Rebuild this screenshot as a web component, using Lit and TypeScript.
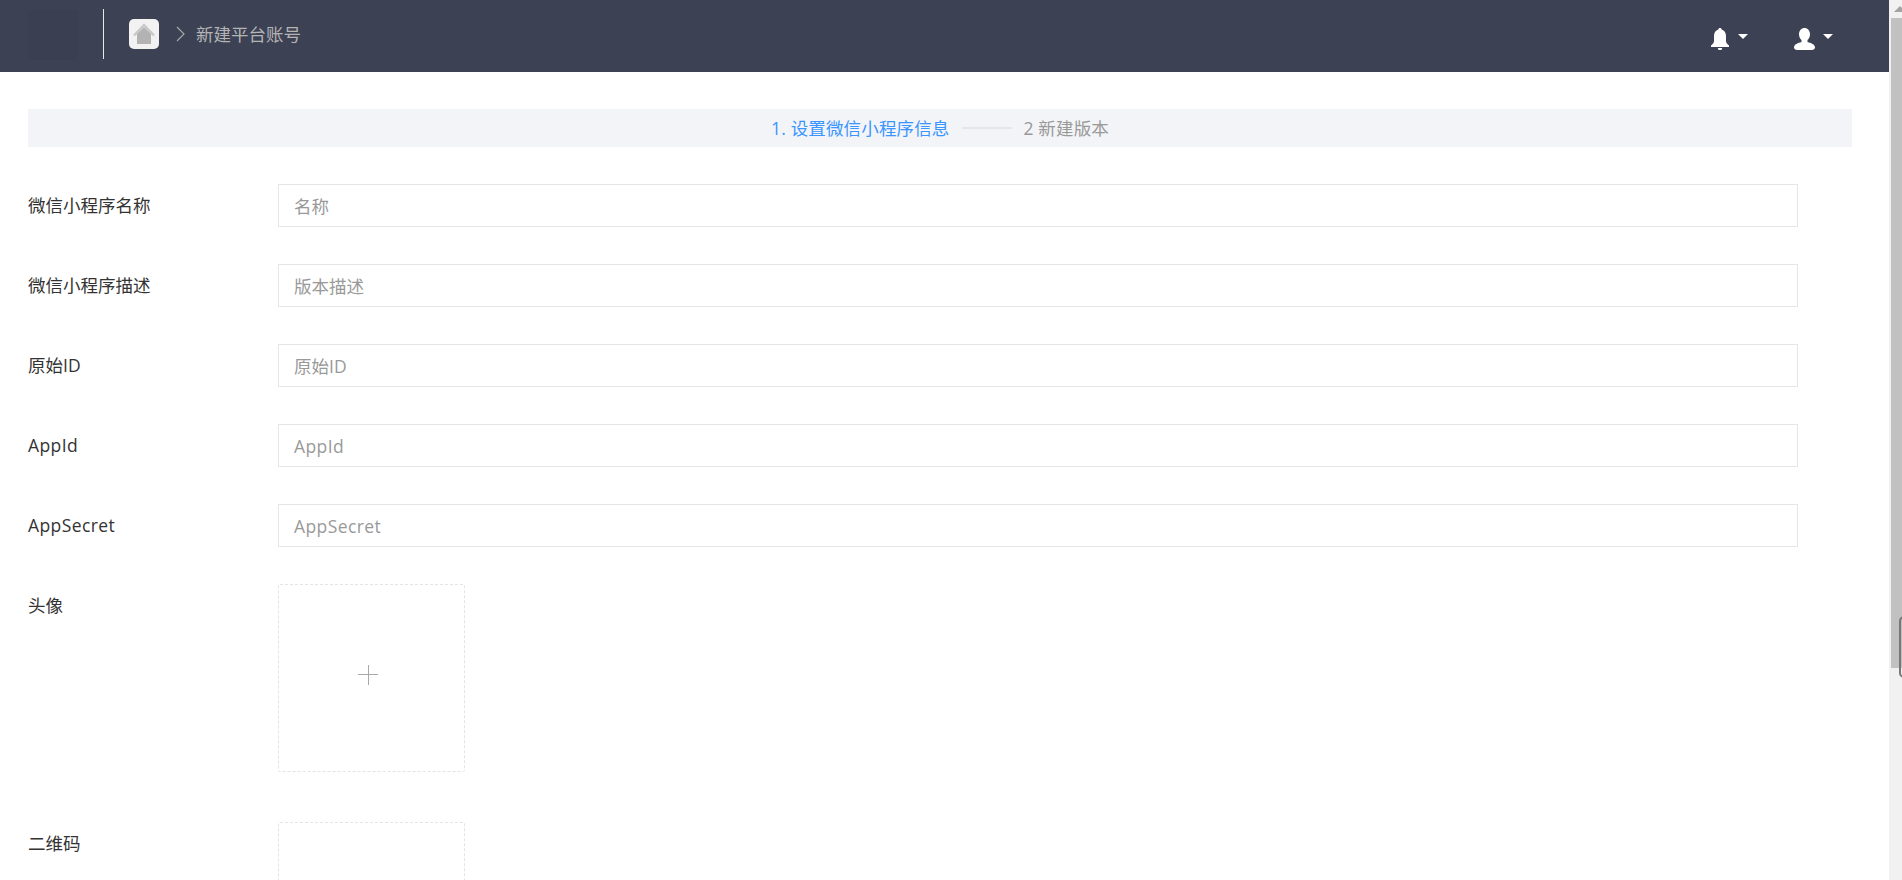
import { LitElement, html, css } from "lit";
import { customElement } from "lit/decorators.js";

const fields = [
  { label: "微信小程序名称", placeholder: "名称", latin: false },
  { label: "微信小程序描述", placeholder: "版本描述", latin: false },
  { label: "原始ID", placeholder: "原始ID", latin: false },
  { label: "AppId", placeholder: "AppId", latin: true },
  { label: "AppSecret", placeholder: "AppSecret", latin: true },
];

@customElement("app-root")
export class AppRoot extends LitElement {
  static styles = css`
    :host {
      display: flex;
      width: 100%;
      height: 880px;
      overflow: hidden;
      background: #fff;
      font-family: "Open Sans", "Noto Sans CJK SC", sans-serif;
      font-size: 17.5px;
      color: #333;
    }
    * { box-sizing: border-box; }
    .page { flex: 1; min-width: 0; height: 880px; overflow: hidden; }
    .topbar {
      display: flex;
      align-items: center;
      height: 72px;
      padding-bottom: 4px;
      background: #3c4154;
      color: #fff;
    }
    .logo { width: 50px; height: 50px; margin: 2px 0 0 28px; background: #3b3f52; }
    .divider { width: 1px; height: 50px; margin-left: 25px; background: #e8e8e8; }
    .home {
      display: flex;
      width: 30px;
      height: 30px;
      margin-left: 25px;
      border-radius: 5px;
      background: #f2f2f2;
    }
    .chevron { margin-left: 17px; display: block; }
    .crumb { margin-left: 11px; color: #b4b4b4; line-height: 24px; }
    .actions { display: flex; align-items: center; margin-left: auto; margin-right: 56px; margin-top: 10px; }
    .action { display: flex; align-items: center; }
    .action + .action { margin-left: 46px; }
    .caret {
      width: 0;
      height: 0;
      margin-left: 9px;
      margin-top: -5px;
      border-left: 5px solid transparent;
      border-right: 5px solid transparent;
      border-top: 5px solid #fff;
    }
    .action.user .caret { margin-left: 8px; }
    .content { padding: 37px 37px 0 28px; }
    .steps {
      display: flex;
      align-items: center;
      justify-content: center;
      height: 38px;
      padding-bottom: 2px;
      background: #f3f4f8;
      color: #999;
      letter-spacing: 0.15px;
    }
    .steps .active { color: #3a95ff; }
    .steps .line { width: 50px; height: 2px; margin: 2px 12px 0; background: #e6e6e6; }
    .row { display: grid; grid-template-columns: 250px 1520px; margin-top: 37px; }
    .row label { color: #333; line-height: 43px; }
    .row input {
      display: block;
      width: 100%;
      height: 43px;
      padding: 0 15px;
      border: 1px solid #e6e6e6;
      outline: none;
      border-radius: 0;
      background: #fff;
      font: inherit;
      color: #333;
    }
    .row.latin label, .row.latin input { letter-spacing: 0.4px; }
    .row input::placeholder { color: #999; opacity: 1; }
    .row.upload { margin-top: 37px; margin-bottom: 50px; }
    .row.upload + .row.upload { margin-top: 0; }
    .drop {
      display: flex;
      align-items: center;
      justify-content: center;
      width: 187px;
      height: 188px;
      padding: 0 7px 7px 0;
      border: 1px dashed #e4e4e4;
      border-radius: 2px;
    }
    .bar {
      position: relative;
      flex: none;
      width: 13px;
      height: 880px;
      background: #f1f1f1;
      overflow: hidden;
    }
    .arrow {
      position: absolute;
      top: 6px;
      left: 5px;
      width: 0;
      height: 0;
      border-left: 6px solid transparent;
      border-right: 6px solid transparent;
      border-bottom: 6px solid #a3a3a3;
    }
    .thumb {
      position: absolute;
      top: 18px;
      left: 2px;
      width: 15px;
      height: 650px;
      background: #c1c1c1;
    }
    .grip {
      position: absolute;
      top: 616px;
      left: 10px;
      width: 12px;
      height: 62px;
      border: 2px solid #777;
      border-radius: 5px;
    }
  `;

  render() {
    return html`
      <div class="page">
        <header class="topbar">
          <div class="logo"></div>
          <div class="divider"></div>
          <div class="home">
            <svg width="30" height="30" viewBox="0 0 30 30">
              <path d="M8 25V14.500L15 8l7 6.500V25z" fill="#b3b3b3" />
              <path d="M5 16.500 15 6l10 10.500" fill="none" stroke="#c9c9c9" stroke-width="2.400" />
            </svg>
          </div>
          <svg class="chevron" width="9" height="16" viewBox="0 0 9 16">
            <path d="M1 1l7 7-7 7" fill="none" stroke="#a6a6a6" stroke-width="1.200" />
          </svg>
          <span class="crumb">新建平台账号</span>
          <div class="actions">
            <div class="action">
              <svg width="18" height="22" viewBox="0 0 18 22">
                <path
                  fill="#fff"
                  d="M9 0c1 0 1.600.700 1.700 1.600C13.400 2.400 15 4.800 15 8v5c0 1.800 1.200 3 3 4.500V19H0v-1.500C1.800 16 3 14.800 3 13V8c0-3.200 1.600-5.600 4.300-6.400C7.400.700 8 0 9 0zM6.800 20h4.400a2.200 2.200 0 0 1-4.400 0z"
                />
              </svg>
              <span class="caret"></span>
            </div>
            <div class="action user">
              <svg width="21" height="22" viewBox="0 0 21 22">
                <path
                  fill="#fff"
                  d="M10.500 0c3.200 0 5.500 2.700 5.500 6.200 0 2.400-1 4.600-2.500 5.800v2c3.500 1 7.500 2.200 7.500 5.500 0 1.600-1.500 2.500-3 2.500H3c-1.500 0-3-.900-3-2.500 0-3.300 4-4.500 7.500-5.500v-2C6 10.800 5 8.600 5 6.200 5 2.700 7.300 0 10.500 0z"
                />
              </svg>
              <span class="caret"></span>
            </div>
          </div>
        </header>
        <main class="content">
          <div class="steps">
            <span class="active">1. 设置微信小程序信息</span>
            <span class="line"></span>
            <span>2 新建版本</span>
          </div>
          ${fields.map(
            (f) => html`
              <div class="row ${f.latin ? "latin" : ""}">
                <label>${f.label}</label>
                <input type="text" placeholder=${f.placeholder} />
              </div>
            `
          )}
          ${["头像", "二维码"].map(
            (l) => html`
              <div class="row upload">
                <label>${l}</label>
                <div class="drop">
                  <svg width="20" height="20" viewBox="0 0 20 20">
                    <path d="M0 9.500h20M10.500 0v20" stroke="#a8a8a8" stroke-width="1" fill="none" />
                  </svg>
                </div>
              </div>
            `
          )}
        </main>
      </div>
      <div class="bar">
        <span class="arrow"></span>
        <div class="thumb"></div>
        <div class="grip"></div>
      </div>
    `;
  }
}
